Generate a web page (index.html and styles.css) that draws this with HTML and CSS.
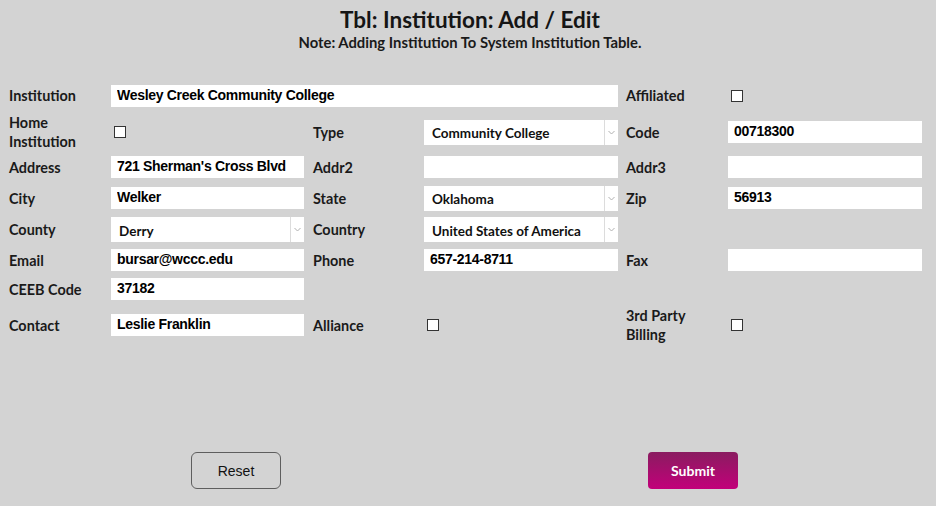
FILE: index.html
```html
<!DOCTYPE html>
<html>
<head>
<meta charset="utf-8">
<link rel="stylesheet" href="styles.css">
</head>
<body>
<div class="page">
  <header class="head">
    <h1 class="title">Tbl: Institution: Add / Edit</h1>
    <p class="note">Note: Adding Institution To System Institution Table.</p>
  </header>

  <form class="form">
    <label class="lbl">Institution</label>
    <div class="field span3"><input class="inp" value="Wesley Creek Community College"></div>
    <label class="lbl lbl3">Affiliated</label>
    <div class="field"><span class="chk"></span></div>

    <label class="lbl">Home<br>Institution</label>
    <div class="field"><span class="chk"></span></div>
    <label class="lbl lbl2">Type</label>
    <div class="field"><div class="sel"><span class="sel-text">Community College</span><span class="arrow"><svg width="7" height="5" viewBox="0 0 7 5"><path d="M0.5 1 L3.5 4 L6.5 1" fill="none" stroke="#b0b0b0" stroke-width="1"/></svg></span></div></div>
    <label class="lbl lbl3">Code</label>
    <div class="field"><input class="inp" value="00718300"></div>

    <label class="lbl">Address</label>
    <div class="field"><input class="inp" value="721 Sherman's Cross Blvd"></div>
    <label class="lbl lbl2">Addr2</label>
    <div class="field"><input class="inp" value=""></div>
    <label class="lbl lbl3">Addr3</label>
    <div class="field"><input class="inp" value=""></div>

    <label class="lbl">City</label>
    <div class="field"><input class="inp" value="Welker"></div>
    <label class="lbl lbl2">State</label>
    <div class="field"><div class="sel"><span class="sel-text">Oklahoma</span><span class="arrow"><svg width="7" height="5" viewBox="0 0 7 5"><path d="M0.5 1 L3.5 4 L6.5 1" fill="none" stroke="#b0b0b0" stroke-width="1"/></svg></span></div></div>
    <label class="lbl lbl3">Zip</label>
    <div class="field"><input class="inp" value="56913"></div>

    <label class="lbl">County</label>
    <div class="field"><div class="sel"><span class="sel-text">Derry</span><span class="arrow"><svg width="7" height="5" viewBox="0 0 7 5"><path d="M0.5 1 L3.5 4 L6.5 1" fill="none" stroke="#b0b0b0" stroke-width="1"/></svg></span></div></div>
    <label class="lbl lbl2">Country</label>
    <div class="field"><div class="sel"><span class="sel-text">United States of America</span><span class="arrow"><svg width="7" height="5" viewBox="0 0 7 5"><path d="M0.5 1 L3.5 4 L6.5 1" fill="none" stroke="#b0b0b0" stroke-width="1"/></svg></span></div></div>
    <span class="lbl lbl3"></span>
    <div class="field"></div>

    <label class="lbl">Email</label>
    <div class="field"><input class="inp" value="bursar@wccc.edu"></div>
    <label class="lbl lbl2">Phone</label>
    <div class="field"><input class="inp" value="657-214-8711"></div>
    <label class="lbl lbl3">Fax</label>
    <div class="field"><input class="inp" value=""></div>

    <label class="lbl">CEEB Code</label>
    <div class="field"><input class="inp" value="37182"></div>
    <span class="lbl lbl2"></span>
    <div class="field"></div>
    <span class="lbl lbl3"></span>
    <div class="field"></div>

    <label class="lbl">Contact</label>
    <div class="field"><input class="inp" value="Leslie Franklin"></div>
    <label class="lbl lbl2">Alliance</label>
    <div class="field"><span class="chk"></span></div>
    <label class="lbl lbl3">3rd Party<br>Billing</label>
    <div class="field"><span class="chk"></span></div>
  </form>

  <div class="actions">
    <button class="btn btn-reset" type="button">Reset</button>
    <button class="btn btn-submit" type="button">Submit</button>
  </div>
</div>
</body>
</html>
```

FILE: styles.css
```css
html, body {
  margin: 0;
  padding: 0;
  background: #d3d3d3;
}
body {
  width: 936px;
  height: 506px;
  overflow: hidden;
  font-family: Lato, "Open Sans", sans-serif;
  color: #1a1a1a;
}
.page {
  padding: 0 14px 0 9px;
}
.head {
  text-align: center;
  padding-top: 6px;
  height: 73px;
  box-sizing: border-box;
  margin-left: 9px;
}
.title {
  margin: 0;
  font-size: 22.5px;
  font-weight: 700;
  line-height: 27px;
  color: #151515;
}
.note {
  margin: 1px 0 0;
  font-size: 14.8px;
  font-weight: 700;
  line-height: 17px;
}
.form {
  display: grid;
  grid-template-columns: 102px 193px 120px 194px 110px 194px;
  grid-template-rows: 31px 42px 28px 34px 29px 32px 26px 46px;
  margin-top: 7px;
  align-items: center;
}
.lbl {
  font-size: 14.4px;
  font-weight: 700;
  line-height: 19px;
  color: #1a1a1a;
}
.lbl2 { padding-left: 9px; }
.lbl3 { padding-left: 8px; }
.span3 { grid-column: span 3; }
.field {
  display: flex;
  align-items: center;
}
.inp {
  width: 100%;
  height: 22px;
  box-sizing: border-box;
  border: none;
  outline: none;
  background: #fff;
  padding: 0 6px 2px;
  font-family: "Liberation Sans", Arial, sans-serif;
  font-weight: 700;
  font-size: 14px;
  letter-spacing: -0.3px;
  color: #000;
  margin: 0;
}
.sel {
  width: 100%;
  height: 25px;
  background: #fff;
  display: flex;
  align-items: center;
  box-sizing: border-box;
}
.sel-text {
  flex: 1;
  padding-left: 8px;
  font-size: 13.5px;
  font-weight: 700;
  color: #111;
  padding-top: 2px;
}
.arrow {
  width: 13px;
  height: 25px;
  border-left: 1px solid #dcdcdc;
  display: flex;
  align-items: center;
  justify-content: center;
}
.chk {
  display: block;
  width: 12px;
  height: 12px;
  box-sizing: border-box;
  border: 1px solid #333;
  background: #fff;
  margin-left: 3px;
}
.actions {
  display: flex;
  padding-left: 182px;
  gap: 367px;
  margin-top: 104px;
}
.btn {
  width: 90px;
  height: 37px;
  box-sizing: border-box;
  font-size: 14px;
  cursor: pointer;
  margin: 0;
}
.btn-reset {
  background: transparent;
  border: 1px solid #5e5e5e;
  border-radius: 6px;
  font-family: "Liberation Sans", Arial, sans-serif;
  color: #111;
}
.btn-submit {
  border: none;
  border-radius: 4px;
  background: linear-gradient(#8a1c60, #c2007a);
  color: #fff;
  font-family: Lato, sans-serif;
  font-weight: 700;
}
```
